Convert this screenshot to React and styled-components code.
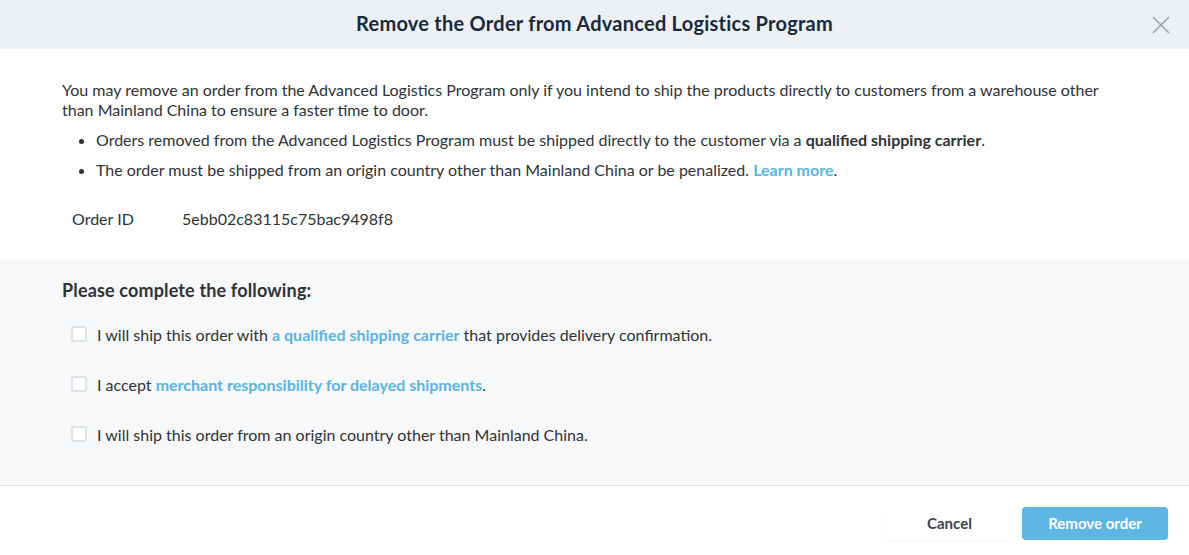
import React, { useState } from 'react';
import styled, { createGlobalStyle } from 'styled-components';

const GlobalStyle = createGlobalStyle`
  body {
    margin: 0;
    background: #ffffff;
    font-family: Lato, "Open Sans", sans-serif;
    color: #2f3337;
  }
`

const Modal = styled.div`
  width: 1189px;
  height: 555px;
  display: flex;
  flex-direction: column;
  background: #fff;
`

const Header = styled.div`
  height: 49px;
  flex-shrink: 0;
  background: #edf0f3;
  display: flex;
  align-items: center;
  justify-content: center;
  position: relative;
`

const Title = styled.h2`
  margin: 0 0 4px;
  font-size: 20px;
  letter-spacing: 0.25px;
  font-weight: 700;
  color: #192a3e;
`

const CloseButton = styled.button`
  position: absolute;
  right: 18px;
  top: 15px;
  width: 20px;
  height: 20px;
  padding: 0;
  border: none;
  background: transparent;
  cursor: pointer;
`

const Intro = styled.div`
  padding: 31px 62px 31px;
  font-size: 16px;
  line-height: 20px;
`

const Para = styled.p`
  margin: 0;
`

const Bullets = styled.ul`
  margin: 0;
  padding-left: 34px;
`

const Bullet = styled.li`
  margin-top: 10px;
`

const Link = styled.a`
  color: #5ab4e4;
  font-weight: 700;
  text-decoration: none;
`

const OrderRow = styled.div`
  display: flex;
  margin-top: 29px;
  padding-left: 10px;
`

const OrderLabel = styled.span`
  width: 110px;
`

const Checklist = styled.div`
  flex: 1;
  background: #f7f8fa;
  padding: 20px 62px 0;
  border-bottom: 1px solid #dfe2e6;
`

const ChecklistTitle = styled.h3`
  margin: 0 0 9px;
  font-size: 18px;
  letter-spacing: 0.15px;
  line-height: 20px;
  font-weight: 700;
  color: #2f3337;
`

const CheckRow = styled.label`
  display: flex;
  align-items: center;
  gap: 10px;
  height: 50px;
  padding-left: 9px;
  font-size: 16px;
  cursor: pointer;
`

const Box = styled.span`
  width: 12px;
  height: 12px;
  border: 2px solid ${props => (props.checked ? '#5ab4e4' : '#dde3e8')};
  border-radius: 2px;
  background: ${props => (props.checked ? '#5ab4e4' : '#fff')};
  flex-shrink: 0;
`

const Footer = styled.div`
  height: 69px;
  flex-shrink: 0;
  display: flex;
  align-items: center;
  justify-content: flex-end;
  gap: 10px;
  padding: 5px 21px 0 0;
  box-sizing: border-box;
`

const CancelButton = styled.button`
  width: 125px;
  height: 33px;
  border: none;
  border-radius: 4px;
  background: #fff;
  box-shadow: 0 1px 2px rgba(0, 0, 0, 0.06);
  font-family: inherit;
  font-size: 15px;
  font-weight: 700;
  color: #3c4650;
  cursor: pointer;
`

const PrimaryButton = styled.button`
  width: 146px;
  height: 33px;
  border: none;
  border-radius: 4px;
  background: #5eb6e4;
  font-family: inherit;
  font-size: 15px;
  font-weight: 700;
  color: #fff;
  cursor: pointer;
`

const Checkbox = ({ children }) => {
  const [checked, setChecked] = useState(false)
  return (
    <CheckRow onClick={() => setChecked(!checked)}>
      <Box checked={checked} />
      <span>{children}</span>
    </CheckRow>
  )
}

const App = () => {
  return (
    <>
      <GlobalStyle />
      <Modal>
        <Header>
          <Title>Remove the Order from Advanced Logistics Program</Title>
          <CloseButton aria-label="close">
            <svg width="20" height="20" viewBox="0 0 20 20">
              <path d="M2 2 L18 18 M18 2 L2 18" stroke="#9ba3ab" strokeWidth="1.6" fill="none" />
            </svg>
          </CloseButton>
        </Header>
        <Intro>
          <Para>
            You may remove an order from the Advanced Logistics Program only if you intend to ship the products directly to customers from a warehouse other than Mainland China to ensure a faster time to door.
          </Para>
          <Bullets>
            <Bullet>
              Orders removed from the Advanced Logistics Program must be shipped directly to the customer via a <b>qualified shipping carrier</b>.
            </Bullet>
            <Bullet>
              The order must be shipped from an origin country other than Mainland China or be penalized. <Link href="#">Learn more</Link>.
            </Bullet>
          </Bullets>
          <OrderRow>
            <OrderLabel>Order ID</OrderLabel>
            <span>5ebb02c83115c75bac9498f8</span>
          </OrderRow>
        </Intro>
        <Checklist>
          <ChecklistTitle>Please complete the following:</ChecklistTitle>
          <Checkbox>
            I will ship this order with <Link href="#">a qualified shipping carrier</Link> that provides delivery confirmation.
          </Checkbox>
          <Checkbox>
            I accept <Link href="#">merchant responsibility for delayed shipments</Link>.
          </Checkbox>
          <Checkbox>I will ship this order from an origin country other than Mainland China.</Checkbox>
        </Checklist>
        <Footer>
          <CancelButton>Cancel</CancelButton>
          <PrimaryButton>Remove order</PrimaryButton>
        </Footer>
      </Modal>
    </>
  )
}

export default App
